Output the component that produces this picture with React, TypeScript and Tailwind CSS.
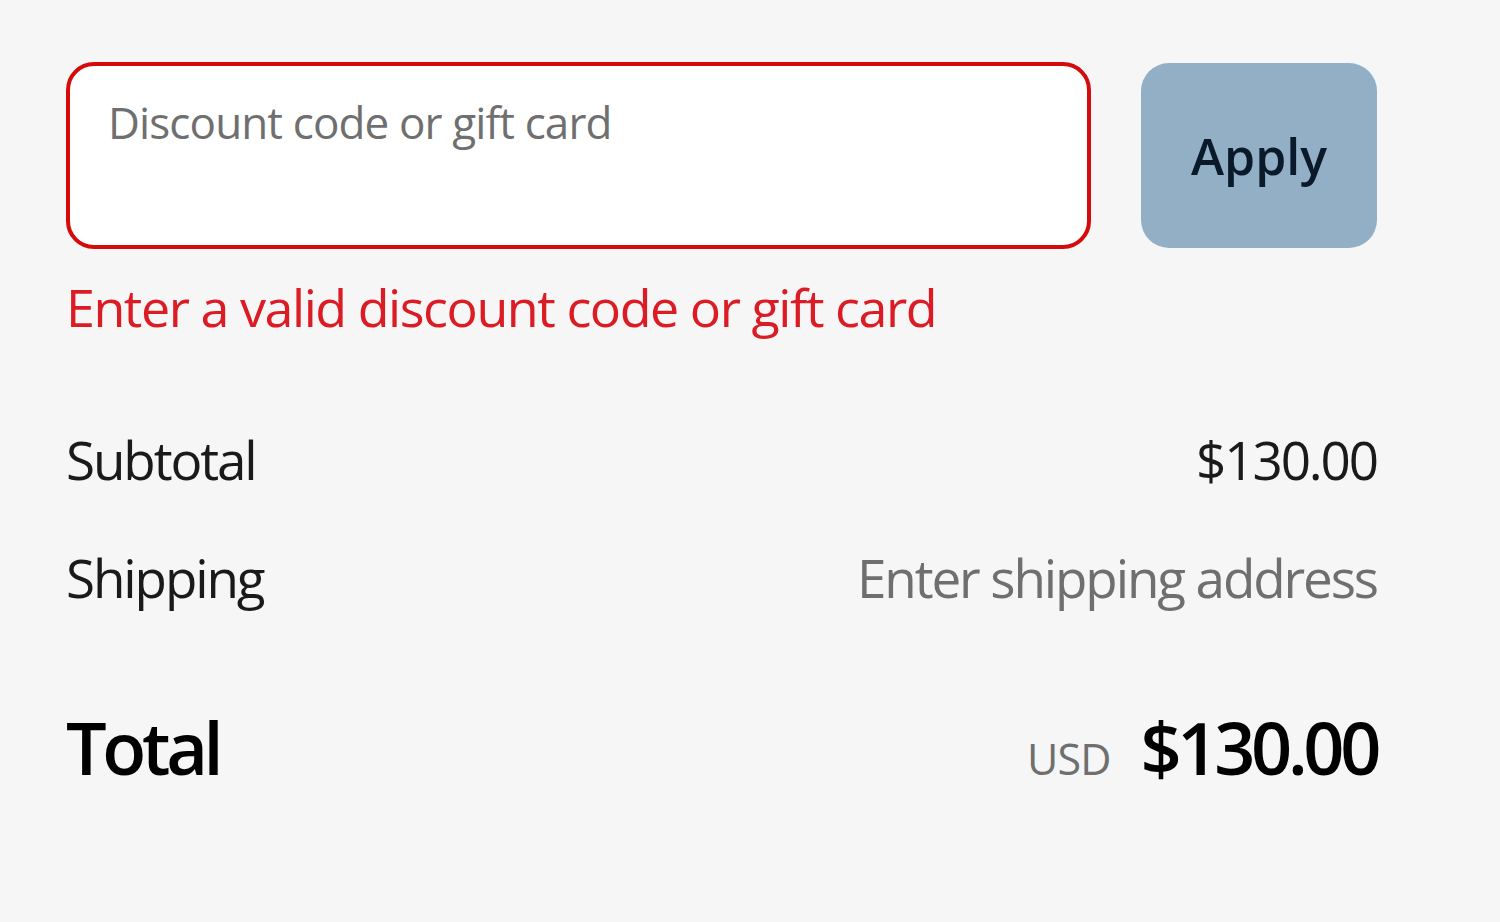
export default function App() {
  return (
    <div className="min-h-[922px] w-full bg-[#f6f6f6] pl-[66px] pr-[123px] pt-[62px] font-['Open_Sans',sans-serif] text-[#1a1a1a]">
      <div className="flex items-start gap-[50px]">
        <div className="h-[187px] flex-1 rounded-[28px] border-4 border-[#d50b0b] bg-white pl-[38px] pt-[34px]">
          <div className="text-[44px] leading-[44px] tracking-[-0.02em] text-[#6f6f6f]">Discount code or gift card</div>
        </div>
        <button className="mt-[1px] h-[185px] w-[236px] rounded-[28px] bg-[#93afc5] text-[50px] font-semibold leading-none text-[#0b1a2b]">
          Apply
        </button>
      </div>
      <div className="mt-[32px] text-[52px] leading-[52px] tracking-[-0.028em] text-[#dc1c24]">
        Enter a valid discount code or gift card
      </div>
      <div className="mt-[99px] flex items-center justify-between text-[53px] leading-[55px] tracking-[-0.04em]">
        <span>Subtotal</span>
        <span>$130.00</span>
      </div>
      <div className="mt-[63px] flex items-center justify-between text-[53px] leading-[55px] tracking-[-0.04em]">
        <span>Shipping</span>
        <span className="text-[#6f6f6f]">Enter shipping address</span>
      </div>
      <div className="mt-[105px] flex items-baseline justify-between">
        <span className="text-[72px] font-semibold leading-[75px] tracking-[-0.06em] text-black">Total</span>
        <span className="flex items-baseline gap-[30px]">
          <span className="text-[43px] leading-none tracking-[-0.02em] text-[#6f6f6f]">USD</span>
          <span className="text-[72px] font-semibold leading-[75px] tracking-[-0.06em] text-black">$130.00</span>
        </span>
      </div>
    </div>
  )
}
